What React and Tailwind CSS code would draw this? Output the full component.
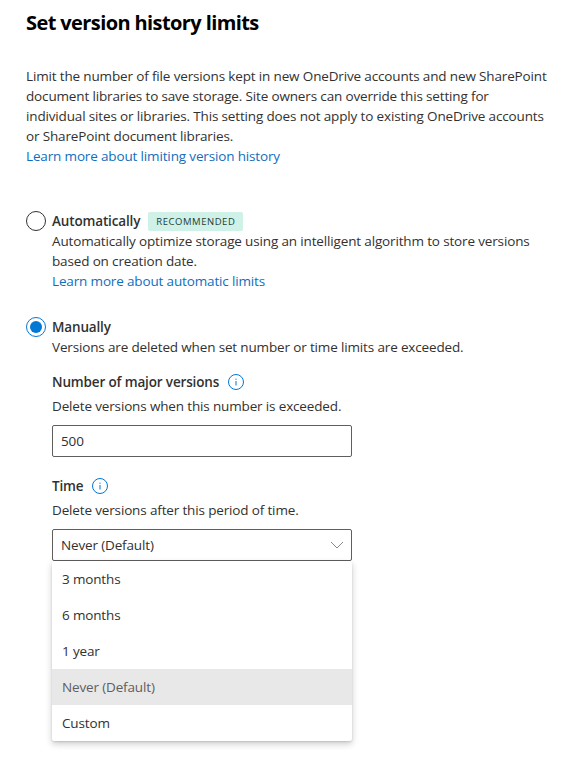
import React from "react";

function Info() {
  return (
    <svg width="16" height="16" viewBox="0 0 16 16" fill="none" className="shrink-0">
      <circle cx="8" cy="8" r="7.5" stroke="#0078d4" strokeWidth="1" />
      <rect x="7.5" y="7" width="1" height="4.5" fill="#0078d4" />
      <rect x="7.5" y="4.6" width="1" height="1.2" fill="#0078d4" />
    </svg>
  );
}

function Radio({ on }) {
  return (
    <span className={`flex h-5 w-5 shrink-0 items-center justify-center rounded-full border ${on ? "border-[#0078d4]" : "border-[#323130]"}`}>
      {on ? <span className="h-[12px] w-[12px] rounded-full bg-[#0078d4]" /> : null}
    </span>
  );
}

const link = "text-[#106ebe]";

export default function App() {
  return (
    <div className="h-[778px] w-[565px] overflow-hidden bg-white pl-[26px] text-[13.5px] leading-5 text-[#323130] [font-family:'Open_Sans','Noto_Sans',sans-serif] tracking-[-0.15px]">
      <h1 className="pt-[9px] text-[20px] font-bold leading-[28px] tracking-[-0.6px] text-black">Set version history limits</h1>
      <p className="mt-[29px] w-[530px]">
        Limit the number of file versions kept in new OneDrive accounts and new SharePoint
        <br />
        document libraries to save storage. Site owners can override this setting for
        <br />
        individual sites or libraries. This setting does not apply to existing OneDrive accounts
        <br />
        or SharePoint document libraries.
        <br />
        <span className={link}>Learn more about limiting version history</span>
      </p>

      <div className="mt-[45px] flex gap-[6px]">
        <Radio />
        <div>
          <div className="flex items-center gap-[8px]">
            <span className="font-semibold">Automatically</span>
            <span className="rounded-[2px] bg-[#cff1e8] px-2 text-[9.5px] font-normal leading-[19px] tracking-[0.55px] text-[#1f3d38]">RECOMMENDED</span>
          </div>
          <p>
            Automatically optimize storage using an intelligent algorithm to store versions
            <br />
            based on creation date.
          </p>
          <p className={link}>Learn more about automatic limits</p>
        </div>
      </div>

      <div className="mt-[26px] flex gap-[6px]">
        <Radio on />
        <div>
          <div className="font-semibold">Manually</div>
          <p>Versions are deleted when set number or time limits are exceeded.</p>

          <div className="mt-[15px] flex items-center gap-[9px] font-semibold">
            <span>Number of major versions</span>
            <Info />
          </div>
          <p className="mt-[4px]">Delete versions when this number is exceeded.</p>
          <div className="mt-[9px] flex h-8 w-[300px] items-center rounded-[2px] border border-[#605e5c] px-2">500</div>

          <div className="mt-[19px] flex items-center gap-[9px] font-semibold">
            <span>Time</span>
            <Info />
          </div>
          <p className="mt-[4px]">Delete versions after this period of time.</p>
          <div className="relative mt-[9px] w-[300px]">
            <div className="flex h-8 items-center justify-between rounded-[2px] border border-[#605e5c] pl-2 pr-[7px]">
              <span>Never (Default)</span>
              <svg width="14" height="8" viewBox="0 0 14 8" fill="none">
                <path d="M1 1l6 6 6-6" stroke="#8a8886" strokeWidth="1" />
              </svg>
            </div>
            <ul className="absolute left-0 top-[32px] w-full rounded-[2px] bg-white shadow-[0_3px_7px_rgba(0,0,0,0.2),0_1px_2px_rgba(0,0,0,0.12)]">
              <li className="flex h-9 items-center px-[10px]">3 months</li>
              <li className="flex h-9 items-center px-[10px]">6 months</li>
              <li className="flex h-9 items-center px-[10px]">1 year</li>
              <li className="flex h-9 items-center bg-[#e8e8e8] px-[10px] text-[#605e5c]">Never (Default)</li>
              <li className="flex h-9 items-center px-[10px]">Custom</li>
            </ul>
          </div>
        </div>
      </div>
    </div>
  );
}
